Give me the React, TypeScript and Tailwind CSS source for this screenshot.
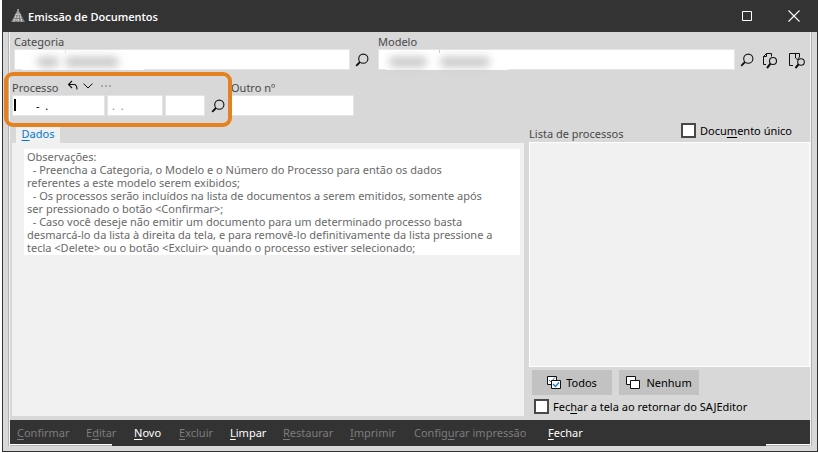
import type { ReactNode } from "react";

function SearchIcon() {
  return (
    <svg width="14" height="14" viewBox="0 0 14 14" fill="none" stroke="#111" aria-hidden>
      <circle cx="8.3" cy="5.7" r="4.6" strokeWidth="1.1" />
      <path d="M5 9 L1.2 12.8" strokeWidth="1.8" />
    </svg>
  );
}

function PageSearchIcon() {
  return (
    <svg width="16" height="17" viewBox="0 0 16 17" fill="none" stroke="#111" aria-hidden>
      <path d="M4 12.5H1.5V4.5L4.5 1.5H9.5V4.5M4.5 1.5V4.5H1.5" />
      <circle cx="11" cy="9" r="3.5" strokeWidth="1.1" />
      <path d="M8.5 11.7 L5 16" strokeWidth="2" />
    </svg>
  );
}

function TemplateSearchIcon() {
  return (
    <svg width="17" height="17" viewBox="0 0 17 17" fill="none" stroke="#111" aria-hidden>
      <path d="M5 13.5H1.5V1.5H11.5V5M7.5 1.5V6L9.5 7.5L11.5 5" />
      <circle cx="13" cy="10" r="3.3" strokeWidth="1.1" />
      <path d="M10.5 12.3 L7.5 16" strokeWidth="2" />
    </svg>
  );
}

function LogoIcon() {
  return (
    <svg width="14" height="14" viewBox="0 0 14 14" aria-hidden>
      <path d="M7 0L14 13L0 13Z" fill="#7c7c7c" />
      <path
        d="M7 0V13M5 5L3 13M9 5L11 13M5 5H9M4 8H10M2 11H12"
        stroke="#e4e4e4"
        strokeDasharray="1.5 1"
        fill="none"
      />
    </svg>
  );
}

function StackIcon({ checked = false }: { checked?: boolean }) {
  return (
    <svg width="14" height="13" viewBox="0 0 14 13" aria-hidden>
      <path d="M0.5 0.5H9.5V8.5H0.5Z" fill="#fff" stroke="#111" />
      {checked && <path d="M2 4L4 6L8 1.5" fill="none" stroke="#1878c8" />}
      <path d="M4.5 4.5H13.5V12.5H4.5Z" fill="#fff" stroke="#111" />
      {checked && <path d="M6 8L8.5 10.5L12 6.5" fill="none" stroke="#1878c8" strokeWidth="1.3" />}
    </svg>
  );
}

const field = "h-[21px] min-w-0 border border-[#e5e5e5] bg-white px-1 outline-none";
const checkbox = "size-[15px] appearance-none border-2 border-[#484848] bg-white checked:bg-[#484848]";

const observations = `Observações:
  - Preencha a Categoria, o Modelo e o Número do Processo para então os dados
referentes a este modelo serem exibidos;
  - Os processos serão incluídos na lista de documentos a serem emitidos, somente após
ser pressionado o botão <Confirmar>;
  - Caso você deseje não emitir um documento para um determinado processo basta
desmarcá-lo da lista à direita da tela, e para removê-lo definitivamente da lista pressione a
tecla <Delete> ou o botão <Excluir> quando o processo estiver selecionado;`;

function Redacted({ codeClass, nameClass }: { codeClass: string; nameClass: string }) {
  return (
    <div className="pointer-events-none absolute bottom-0 left-2 flex h-[17px] w-[122px] items-center bg-white" aria-hidden>
      <span className={`h-[10px] bg-[#c6c6c6] blur-xs ${codeClass}`} />
      <span className={`h-[10px] bg-[#c6c6c6] blur-xs ${nameClass}`} />
    </div>
  );
}

function Key({ children }: { children: ReactNode }) {
  return <u className="underline-offset-2">{children}</u>;
}

function MenuAction({ children, className = "", disabled = false }: { children: ReactNode; className?: string; disabled?: boolean }) {
  return (
    <button type="button" disabled={disabled} className={`shrink-0 text-left text-white disabled:text-[#7c7c7c] ${className}`}>
      {children}
    </button>
  );
}

export default function App() {
  return (
    <div className="bg-white pr-px pl-[2px] font-['Noto_Sans','Open_Sans',sans-serif] text-[11px] leading-[13px] text-[#484848]">
      <div className="border border-t-0 border-[#333] bg-[#d8d8d8]">
        <header className="flex h-8 items-center bg-[#333] pr-[17px] pl-2 text-white">
          <LogoIcon />
          <h1 className="ml-[3px] flex-1 pt-px font-['Open_Sans','Noto_Sans',sans-serif] text-[11px] font-semibold">Emissão de Documentos</h1>
          <button type="button" aria-label="Maximizar" className="mr-9">
            <svg width="10" height="10" viewBox="0 0 10 10" fill="none" stroke="#fff" aria-hidden>
              <path d="M0.5 0.5H9.5V9.5H0.5Z" />
            </svg>
          </button>
          <button type="button" aria-label="Fechar janela">
            <svg width="12" height="12" viewBox="0 0 12 12" stroke="#fff" strokeWidth="1.1" aria-hidden>
              <path d="M0.5 0.5L11.5 11.5M11.5 0.5L0.5 11.5" />
            </svg>
          </button>
        </header>

        <main className="mx-[5px] mb-[5px] border-x border-[#b4b4b4]">
          <div className="border-x border-[#f4f4f4]">
            <section className="flex pt-[3px] pl-1">
              <div className="flex flex-[364] items-end">
                <div className="flex-1">
                  <label htmlFor="categoria" className="mb-px block">Categoria</label>
                  <div className="relative flex">
                    <input id="categoria" className={`${field} w-[52px]`} />
                    <input aria-label="Descrição da categoria" className={`${field} flex-1 border-l-0`} />
                    <Redacted codeClass="ml-4 w-5" nameClass="ml-2 w-[52px]" />
                  </div>
                </div>
                <button type="button" aria-label="Buscar categoria" className="mr-[9px] mb-[3px] ml-[5px]">
                  <SearchIcon />
                </button>
              </div>
              <div className="flex flex-[432] items-end">
                <div className="flex-1">
                  <label htmlFor="modelo" className="mb-px block">Modelo</label>
                  <div className="relative flex">
                    <input id="modelo" className={`${field} w-[62px] border-r-[#d0d0d0]`} />
                    <input aria-label="Descrição do modelo" className={`${field} flex-1 border-l-0`} />
                    <Redacted codeClass="ml-1 w-9" nameClass="ml-[15px] w-12" />
                  </div>
                </div>
                <button type="button" aria-label="Buscar modelo" className="mb-[3px] ml-[5px]">
                  <SearchIcon />
                </button>
                <button type="button" aria-label="Visualizar modelo" className="mb-px ml-2">
                  <PageSearchIcon />
                </button>
                <button type="button" aria-label="Localizar modelo" className="mr-[5px] mb-px ml-[10px]">
                  <TemplateSearchIcon />
                </button>
              </div>
            </section>

            <section className="flex items-end pt-[9px] pl-[2px]">
              <div className="relative w-[219px]">
                <div className="flex h-4 items-start">
                  <label htmlFor="processo" className="mt-[2px] w-[55px]">Processo</label>
                  <button type="button" aria-label="Desfazer" className="mt-px">
                    <svg width="12" height="12" viewBox="0 0 12 12" fill="none" stroke="#111" strokeWidth="1.1" aria-hidden>
                      <path d="M5 1L1.5 4.5L5 8M1.5 4.5H7.5Q10 5 10 9.5" />
                    </svg>
                  </button>
                  <button type="button" aria-label="Histórico" className="mt-[3px] ml-1">
                    <svg width="10" height="8" viewBox="0 0 10 8" fill="none" stroke="#111" aria-hidden>
                      <path d="M0.5 1.5L5 6L9.5 1.5" />
                    </svg>
                  </button>
                  <button type="button" aria-label="Mais opções" className="mt-[6px] ml-2">
                    <svg width="11" height="2" viewBox="0 0 11 2" fill="#aaa" aria-hidden>
                      <path d="M0 0H2V2H0ZM4 0H6V2H4ZM8 0H10V2H8Z" />
                    </svg>
                  </button>
                </div>
                <div className="flex items-center gap-[2px]">
                  <div className="relative flex">
                    <input id="processo" defaultValue="-  ." className={`${field} w-[93px] pl-[23px] text-black`} />
                    <span className="absolute top-1 left-[2px] h-3 w-[2px] bg-black" />
                  </div>
                  <input aria-label="Ano do processo" defaultValue=".  ." className={`${field} w-14 text-[#8a8a8a]`} />
                  <input aria-label="Foro do processo" className={`${field} w-10`} />
                  <button type="button" aria-label="Buscar processo" className="ml-1">
                    <SearchIcon />
                  </button>
                </div>
                <div className="pointer-events-none absolute -top-[7px] -bottom-[11px] -left-[8px] w-[228px] rounded-[9px] border-4 border-[#e58220]" />
              </div>
              <div className="flex flex-col">
                <label htmlFor="outro" className="mb-px">Outro nº</label>
                <input id="outro" className={`${field} w-[123px]`} />
              </div>
            </section>

            <section className="flex pt-[9px] pb-1">
              <div className="flex flex-[514] flex-col pl-[2px]">
                <button type="button" className="ml-1 h-[18px] w-11 bg-[#f1f1f1] pb-[2px] text-[#0078d0]">
                  <Key>D</Key>ados
                </button>
                <div className="flex-1 bg-[#f1f1f1] pt-[6px] pr-1 pl-3">
                  <p className="bg-white px-[3px] pt-px pb-px whitespace-pre-wrap text-[#696969]">{observations}</p>
                </div>
              </div>
              <div className="flex-[282] pl-[5px]">
                <div className="flex h-[17px] items-center justify-between pr-[18px]">
                  <h2 id="lista">Lista de processos</h2>
                  <label className="mb-[6px] flex items-center gap-1 text-black">
                    <input type="checkbox" className={checkbox} />
                    <span>Docu<Key>m</Key>ento único</span>
                  </label>
                </div>
                <div role="listbox" aria-labelledby="lista" className="h-[225px] border border-white bg-[#f1f1f1]" />
                <div className="flex gap-[7px] pt-[3px] pl-[3px] text-black">
                  <button type="button" className="flex h-[25px] w-20 items-center justify-center gap-[5px] bg-[#c2c2c2]">
                    <StackIcon checked />
                    Todos
                  </button>
                  <button type="button" className="flex h-[25px] w-20 items-center justify-center gap-[6px] bg-[#c2c2c2]">
                    <StackIcon />
                    Nenhum
                  </button>
                </div>
                <label className="mt-1 mb-[2px] ml-[5px] flex items-center gap-1 text-black">
                  <input type="checkbox" className={checkbox} />
                  <span>Fec<Key>h</Key>ar a tela ao retornar do SAJEditor</span>
                </label>
              </div>
            </section>

            <footer className="flex h-6 items-center bg-[#333] pl-[7px]">
              <MenuAction disabled className="w-[69px]"><Key>C</Key>onfirmar</MenuAction>
              <MenuAction disabled className="w-12">E<Key>d</Key>itar</MenuAction>
              <MenuAction className="w-[45px]"><Key>N</Key>ovo</MenuAction>
              <MenuAction disabled className="w-[51px]"><Key>E</Key>xcluir</MenuAction>
              <MenuAction className="w-[53px]"><Key>L</Key>impar</MenuAction>
              <MenuAction disabled className="w-[67px]"><Key>R</Key>estaurar</MenuAction>
              <MenuAction disabled className="w-16"><Key>I</Key>mprimir</MenuAction>
              <MenuAction disabled className="w-[134px]">Config<Key>u</Key>rar impressão</MenuAction>
              <MenuAction><Key>F</Key>echar</MenuAction>
            </footer>
            <div className="flex h-[2px] justify-between bg-[#333]">
              <span className="w-[102px] border-b border-[#b4b4b4] bg-white" />
              <span className="w-11 border-b border-[#b4b4b4] bg-white" />
            </div>
          </div>
        </main>
      </div>
    </div>
  );
}
